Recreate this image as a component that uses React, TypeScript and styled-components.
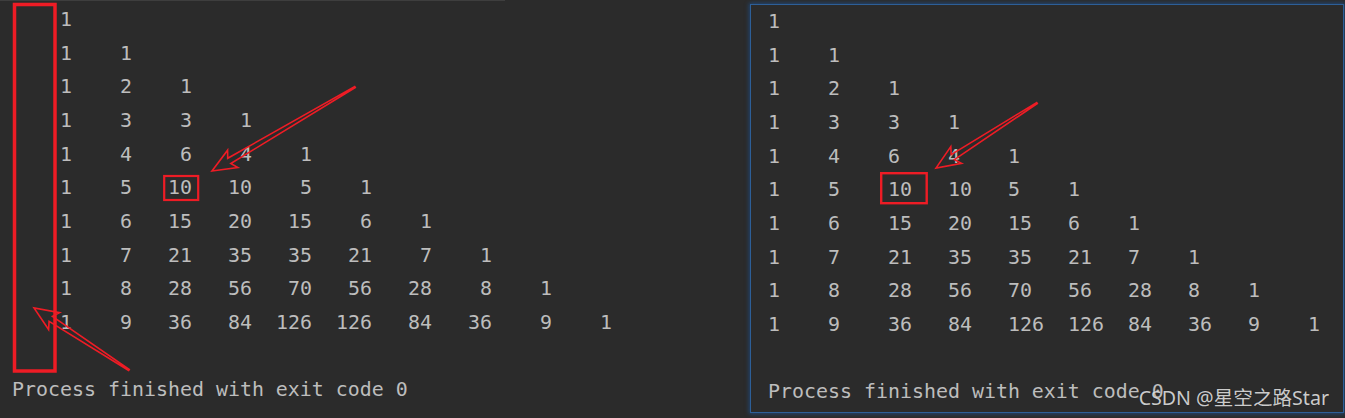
import React from "react";
import styled, { createGlobalStyle } from "styled-components";

const GlobalStyle = createGlobalStyle`
  html, body {
    margin: 0;
    padding: 0;
    background: #2b2b2b;
  }
  body {
    width: 1345px;
    height: 418px;
    overflow: hidden;
  }
`;

const LINE = 33.67;
const CELL = 60;

const Page = styled.div`
  position: relative;
  width: 1345px;
  height: 418px;
  display: flex;
  align-items: flex-start;
  background: #2b2b2b;
  font-family: "DejaVu Sans Mono", "Liberation Mono", monospace;
  font-size: 19.93px;
  color: #bdbdbd;
`;

const LeftConsole = styled.div`
  width: 505px;
  box-sizing: border-box;
  border-top: 1px solid #3e3e3e;
  padding: 2px 0 0 12px;
  display: flex;
  flex-direction: column;
`;

const RightConsole = styled.div`
  margin-left: 245px;
  margin-top: 4px;
  width: 594px;
  height: 409px;
  box-sizing: border-box;
  border: 1px solid #2d5f98;
  box-shadow: 0 0 4px 1px rgba(30, 80, 140, 0.75);
  padding: 0 0 0 17px;
  display: flex;
  flex-direction: column;
`;

const Row = styled.div`
  display: flex;
  height: ${LINE}px;
  line-height: ${LINE}px;
  white-space: pre;
`;

const Cell = styled.span<{ $align: "left" | "right" }>`
  width: ${CELL}px;
  flex: none;
  text-align: ${(p) => p.$align};
`;

const Watermark = styled.div`
  position: absolute;
  top: 386px;
  right: 16px;
  font-family: "Noto Sans", "Noto Sans CJK SC", sans-serif;
  font-size: 19.6px;
  line-height: 24px;
  color: rgba(236, 236, 236, 0.85);
  text-shadow: 0 0 1px rgba(0, 0, 0, 0.4);
  white-space: nowrap;
`;

const Overlay = styled.svg`
  position: absolute;
  left: 0;
  top: 0;
  pointer-events: none;
`;

function pascal(): number[][] {
  const rows: number[][] = [];
  for (let i = 0; i < 10; i++) {
    const r: number[] = [];
    for (let k = 0; k <= i; k++) {
      r.push(k === 0 || k === i ? 1 : rows[i - 1][k - 1] + rows[i - 1][k]);
    }
    rows.push(r);
  }
  return rows;
}

const ROWS = pascal();

type Pt = [number, number];

function arrowPoints(tip: Pt, start: Pt): string {
  const dx = start[0] - tip[0];
  const dy = start[1] - tip[1];
  const len = Math.hypot(dx, dy);
  const u: Pt = [dx / len, dy / len];
  const n: Pt = [u[1] * -1, u[0]];
  const headLen = 24;
  const headHalf = 10;
  const innerLen = 20;
  const innerHalf = 3;
  const tail = 0.6;
  const at = (l: number, w: number): Pt => [
    tip[0] + u[0] * l + n[0] * w,
    tip[1] + u[1] * l + n[1] * w,
  ];
  const pts: Pt[] = [
    [start[0] + n[0] * tail, start[1] + n[1] * tail],
    at(innerLen, innerHalf),
    at(headLen, headHalf),
    tip,
    at(headLen, -headHalf),
    at(innerLen, -innerHalf),
    [start[0] - n[0] * tail, start[1] - n[1] * tail],
  ];
  return pts.map((p) => `${p[0].toFixed(1)},${p[1].toFixed(1)}`).join(" ");
}

const RED = "#ee1c25";

const Console: React.FC<{ align: "left" | "right" }> = ({ align }) => (
  <>
    {ROWS.map((r, i) => (
      <Row key={i}>
        {r.map((v, j) => (
          <Cell key={j} $align={align}>
            {v}
          </Cell>
        ))}
      </Row>
    ))}
    <Row />
    <Row>Process finished with exit code 0</Row>
  </>
);

export default function App() {
  return (
    <>
      <GlobalStyle />
      <Page>
        <LeftConsole>
          <Console align="right" />
        </LeftConsole>
        <RightConsole>
          <Console align="left" />
        </RightConsole>
        <Overlay width={1345} height={418} viewBox="0 0 1345 418">
          <rect x={14.5} y={4.5} width={40.5} height={366.5} fill="none" stroke={RED} strokeWidth={3.5} />
          <rect x={164.2} y={176} width={34} height={24} fill="none" stroke={RED} strokeWidth={2.2} />
          <rect x={881.2} y={173.2} width={45.5} height={30} fill="none" stroke={RED} strokeWidth={2.4} />
          <polygon
            points={arrowPoints([212, 171], [355, 87])}
            fill="none"
            stroke={RED}
            strokeWidth={1.6}
            strokeLinejoin="miter"
          />
          <polygon
            points={arrowPoints([34, 308], [129, 370])}
            fill="none"
            stroke={RED}
            strokeWidth={1.6}
            strokeLinejoin="miter"
          />
          <polygon
            points={arrowPoints([936, 168], [1037, 103])}
            fill="none"
            stroke={RED}
            strokeWidth={1.6}
            strokeLinejoin="miter"
          />
        </Overlay>
        <Watermark>CSDN @星空之路Star</Watermark>
      </Page>
    </>
  );
}
